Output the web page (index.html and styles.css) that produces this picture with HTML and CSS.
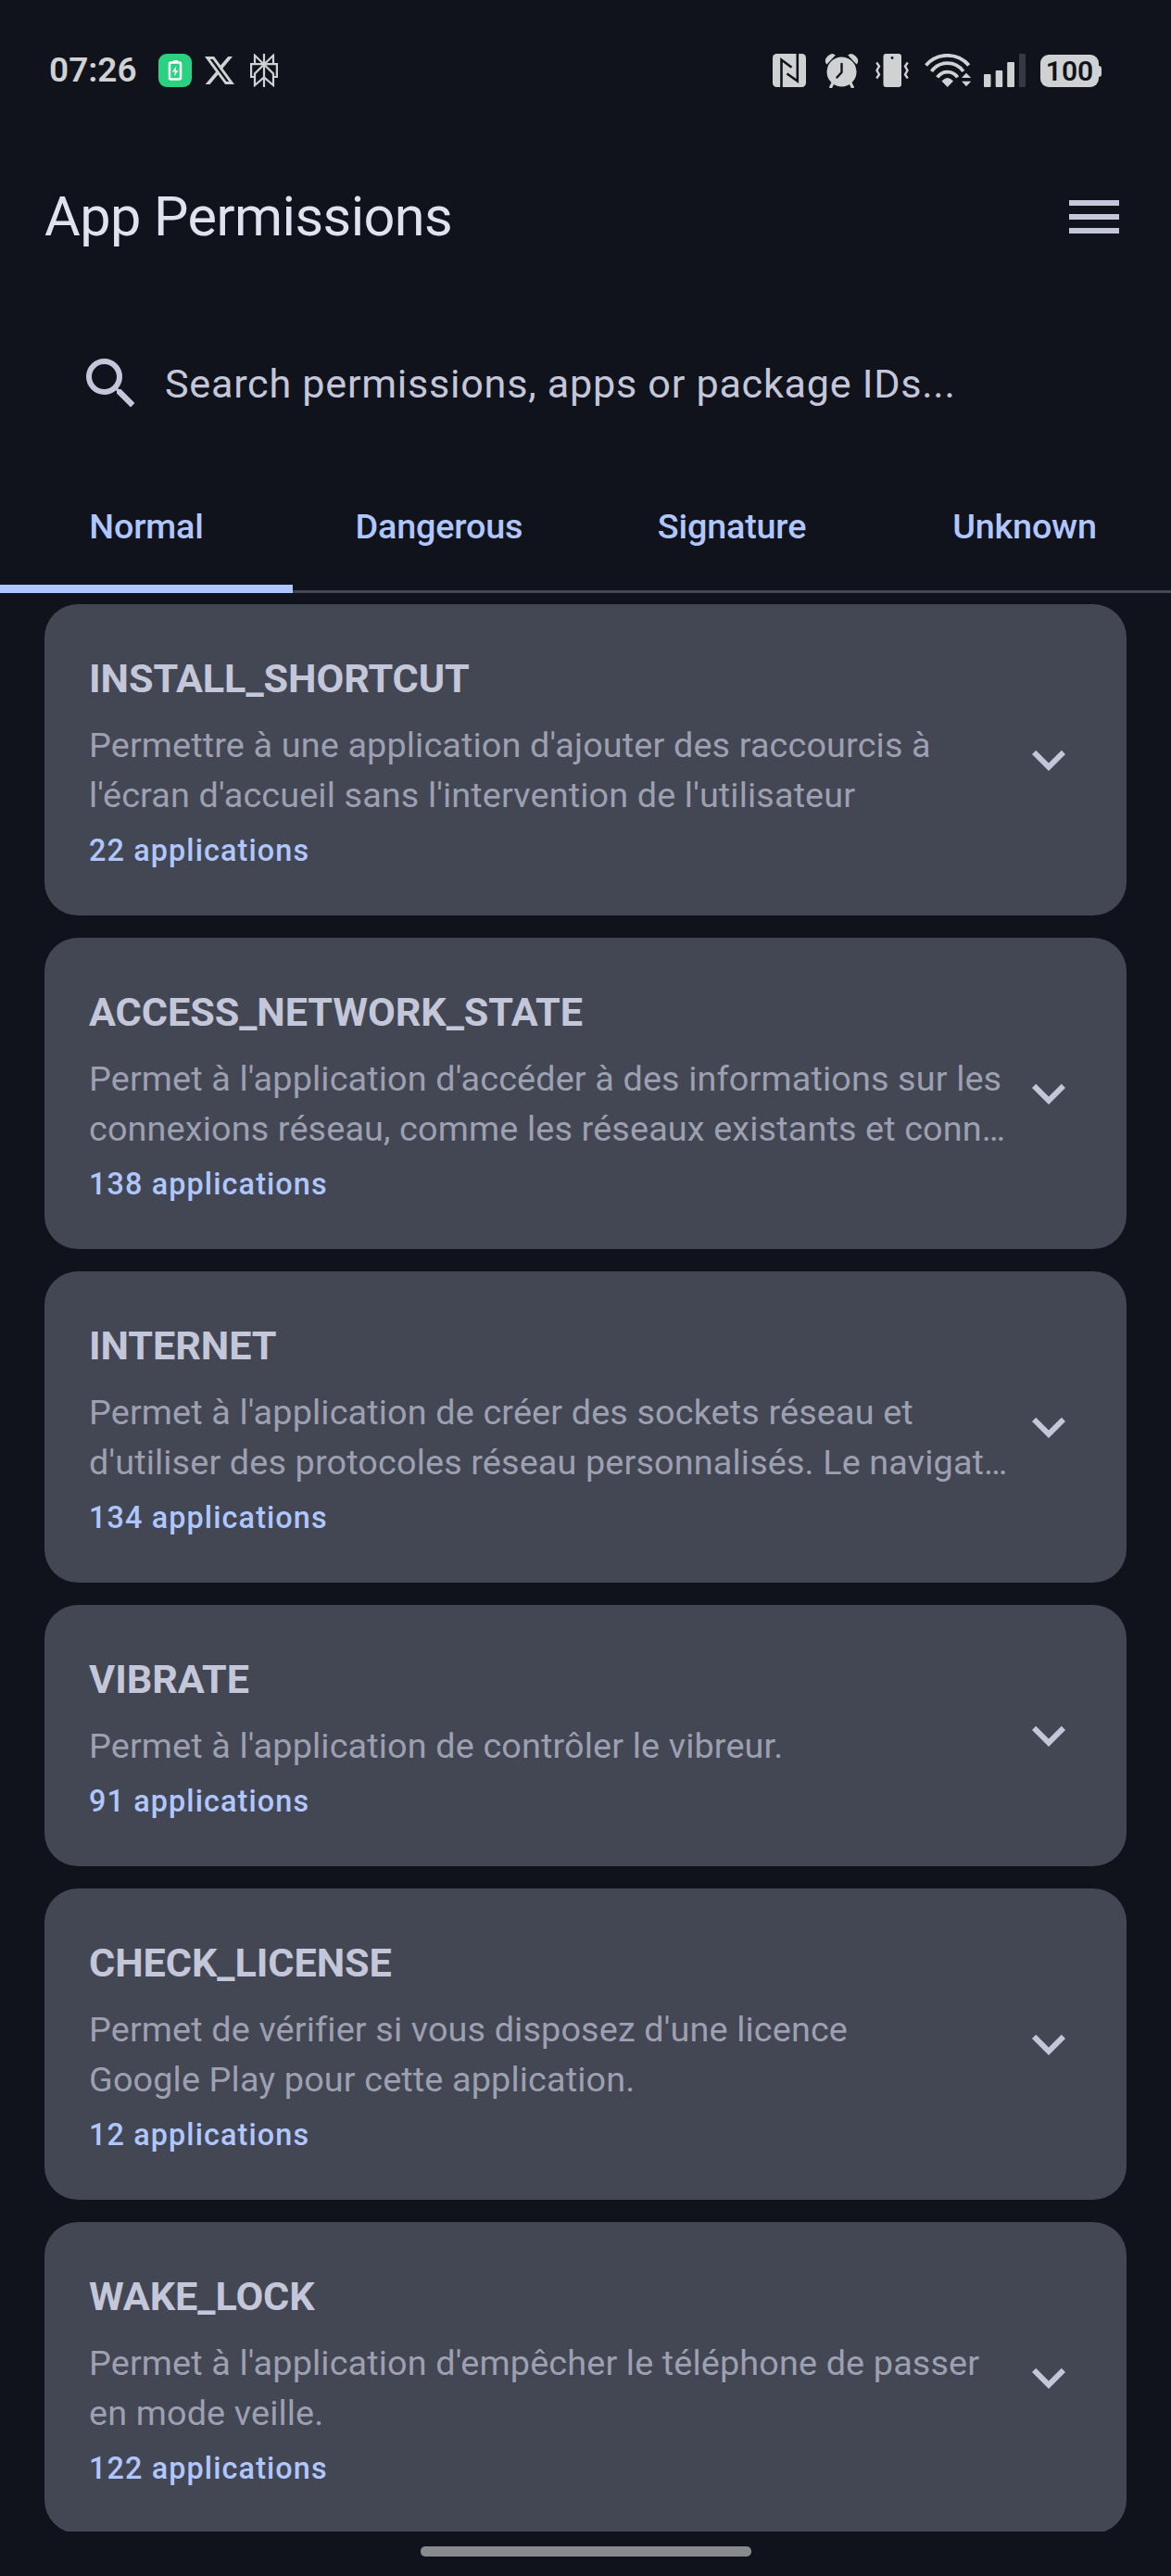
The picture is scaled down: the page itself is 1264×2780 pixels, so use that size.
FILE: index.html
```html
<!DOCTYPE html>
<html lang="fr">
<head>
<meta charset="utf-8">
<title>App Permissions</title>
<link rel="stylesheet" href="styles.css">
</head>
<body>
<svg class="defs" width="0" height="0"><symbol id="chevron" viewBox="0 0 24 24"><path d="M16.59 8.59 12 13.17 7.41 8.59 6 10l6 6 6-6z"/></symbol></svg>
<div class="screen">
  <div class="status">
    <div class="status-left">
      <span class="clock">07:26</span>
      <svg class="i-charge" width="36" height="36" viewBox="0 0 36 36"><rect width="36" height="36" rx="9" fill="#2ad181"/><path d="M16 7h5v2h-5z" fill="#fff"/><rect x="12" y="9.500" width="12" height="18" rx="1.500" fill="none" stroke="#fff" stroke-width="2.500"/><path d="M19.500 13 14.800 19.500h3L17 24.500l4.500-6.500h-3z" fill="#fff"/></svg>
      <svg class="i-x" width="32" height="30" viewBox="1.250 2.250 21.600 19.500" preserveAspectRatio="none"><path fill="currentColor" d="M18.244 2.250h3.308l-7.227 8.260 8.502 11.240H16.170l-5.214-6.817L4.990 21.750H1.680l7.730-8.835L1.254 2.250H8.080l4.713 6.231zm-1.161 17.520h1.833L7.084 4.126H5.117z"/></svg>
      <svg class="i-plex" width="30" height="36" viewBox="0 0 30 36" fill="none" stroke="currentColor" stroke-width="2.200"><path d="M15 0V36M5 11V1.800L15 11.500 25 1.800V11M5 25H1.100V11.200H28.900V25H25M15 11.500 5 21.500V34L15 25.500 25 34V21.500Z"/></svg>
    </div>
    <div class="status-right">
      <svg class="i-nfc" width="36" height="36" viewBox="0 0 36 36"><rect width="36" height="36" rx="4.500" fill="currentColor"/><path d="M9.500 36V6.500L20.500 14.800M26.800 0V29.500L15.500 21.500" fill="none" stroke="#10131c" stroke-width="2.600"/></svg>
      <svg class="i-alarm" width="38" height="38" viewBox="0 0 38 38"><circle cx="18.500" cy="20.500" r="16" fill="currentColor"/><path d="M2.500 12.500Q-1.500 8 3.500 3.500 8-1 11.800 2.500ZM34.500 12.500Q38.500 8 33.500 3.500 29-1 25.200 2.500Z" fill="currentColor"/><path d="M9 32.500 6.800 37M28 32.500 30.200 37" stroke="currentColor" stroke-width="3.200" stroke-linecap="round"/><path d="M18.500 12V21L13.500 26.500" fill="none" stroke="#10131c" stroke-width="2.400" stroke-linecap="round"/></svg>
      <svg class="i-vib" width="36" height="36" viewBox="0 0 36 36"><rect x="8.500" width="19.500" height="36" rx="3" fill="currentColor"/><circle cx="18" cy="4.500" r="1.400" fill="#10131c"/><path d="M1.200 9.500 4 13.500 1.500 18 4 22.500 1.200 26.500M34.800 9.500 32 13.500 34.500 18 32 22.500 34.800 26.500" fill="none" stroke="currentColor" stroke-width="2.400"/></svg>
      <svg class="i-wifi" width="51" height="36" viewBox="0 0 51 36"><g fill="none" stroke="currentColor" stroke-width="3.800"><path d="M1.500 12.500A30.500 30.500 0 0 1 47.800 12.500"/><path d="M7.500 19A21 21 0 0 1 41.800 19"/><path d="M13.800 25.500A13 13 0 0 1 35.500 25.500"/></g><path d="M18.500 29.500Q24.700 22.500 31 29.500L24.700 36zM40 26 45 20.700 50.200 26zM40 29.800 45 35.300 50.200 29.800z" fill="currentColor"/></svg>
      <svg class="i-signal" width="45" height="36" viewBox="0 0 45 36" fill="currentColor"><rect y="22" width="7.500" height="14" rx="1"/><rect x="12.700" y="18" width="7.500" height="18" rx="1"/><rect x="25.200" y="9" width="7.800" height="27" rx="1"/><rect x="38" width="7" height="36" rx="1" fill="#363941"/></svg>
      <div class="battery">100</div>
    </div>
  </div>

  <header class="appbar">
    <h1>App Permissions</h1>
    <svg width="72" height="72" viewBox="0 0 24 24" fill="currentColor"><path d="M3 18h18v-2H3v2zm0-5h18v-2H3v2zm0-7v2h18V6H3z"/></svg>
  </header>

  <div class="search">
    <svg width="72" height="72" viewBox="0 0 24 24" fill="currentColor"><path d="M15.500 14h-.79l-.28-.27A6.471 6.471 0 0 0 16 9.500 6.500 6.500 0 1 0 9.500 16c1.610 0 3.090-.59 4.230-1.570l.27.28v.79l5 4.990L20.490 19l-4.990-5zm-6 0C7.010 14 5 11.990 5 9.500S7.010 5 9.500 5 14 7.010 14 9.500 11.990 14 9.500 14z"/></svg>
    <span>Search permissions, apps or package IDs...</span>
  </div>

  <nav class="tabs">
    <div class="tab active">Normal</div>
    <div class="tab">Dangerous</div>
    <div class="tab">Signature</div>
    <div class="tab">Unknown</div>
  </nav>

  <main class="list">
    <article class="card">
      <div class="info">
        <h2>INSTALL_SHORTCUT</h2>
        <p>Permettre à une application d'ajouter des raccourcis à<br>l'écran d'accueil sans l'intervention de l'utilisateur</p>
        <div class="count">22 applications</div>
      </div>
      <svg class="chevron"><use href="#chevron"/></svg>
    </article>
    <article class="card">
      <div class="info">
        <h2>ACCESS_NETWORK_STATE</h2>
        <p>Permet à l'application d'accéder à des informations sur les<br>connexions réseau, comme les réseaux existants et conn…</p>
        <div class="count">138 applications</div>
      </div>
      <svg class="chevron"><use href="#chevron"/></svg>
    </article>
    <article class="card">
      <div class="info">
        <h2>INTERNET</h2>
        <p>Permet à l'application de créer des sockets réseau et<br>d'utiliser des protocoles réseau personnalisés. Le navigat…</p>
        <div class="count">134 applications</div>
      </div>
      <svg class="chevron"><use href="#chevron"/></svg>
    </article>
    <article class="card">
      <div class="info">
        <h2>VIBRATE</h2>
        <p>Permet à l'application de contrôler le vibreur.</p>
        <div class="count">91 applications</div>
      </div>
      <svg class="chevron"><use href="#chevron"/></svg>
    </article>
    <article class="card">
      <div class="info">
        <h2>CHECK_LICENSE</h2>
        <p>Permet de vérifier si vous disposez d'une licence<br>Google Play pour cette application.</p>
        <div class="count">12 applications</div>
      </div>
      <svg class="chevron"><use href="#chevron"/></svg>
    </article>
    <article class="card">
      <div class="info">
        <h2>WAKE_LOCK</h2>
        <p>Permet à l'application d'empêcher le téléphone de passer<br>en mode veille.</p>
        <div class="count">122 applications</div>
      </div>
      <svg class="chevron"><use href="#chevron"/></svg>
    </article>
  </main>

  <footer class="gesture"><div class="pill"></div></footer>
</div>
</body>
</html>
```
FILE: styles.css
```css
* { box-sizing: border-box; margin: 0; }
body { background: #10131c; font-family: Roboto, sans-serif; color: #c4c6d9; }
svg { display: block; flex: none; }
.defs { position: absolute; }
.screen { width: 1264px; height: 2780px; display: flex; flex-direction: column; overflow: hidden; }

.status { height: 138px; padding: 0 75px 0 53px; display: flex; justify-content: space-between; align-items: flex-start; color: #d0d1d3; }
.status-left, .status-right { display: flex; align-items: center; height: 36px; margin-top: 58px; }
.clock { width: 118px; font-size: 37px; font-weight: 600; line-height: 36px; }
.i-x { margin-left: 14px; }
.i-plex { margin-left: 17px; }
.i-alarm { margin-left: 20px; }
.i-vib { margin-left: 17px; }
.i-wifi { margin-left: 17px; }
.i-signal { margin-left: 13px; }
.battery { position: relative; width: 63px; height: 35px; margin: 1px 3px 0 16px; border-radius: 9px; background: #d0d1d3; color: #10131c; font-size: 30px; font-weight: 600; line-height: 35px; text-align: center; }
.battery::after { content: ""; position: absolute; right: -3px; top: 12px; width: 4px; height: 12px; border-radius: 0 3px 3px 0; background: #d0d1d3; }

.appbar { height: 192px; padding: 0 47px 0 48px; display: flex; align-items: center; justify-content: space-between; }
.appbar h1 { font-size: 59.4px; font-weight: 400; line-height: 76px; letter-spacing: -.55px; color: #e1e2ef; }

.search { height: 166px; padding: 2px 84px 0; display: flex; align-items: center; gap: 22px; font-size: 43.2px; line-height: 65px; letter-spacing: .71px; }

.tabs { height: 144px; display: grid; grid-template-columns: repeat(4, 1fr); box-shadow: inset 0 -3px #434653; }
.tab { display: flex; align-items: center; justify-content: center; font-size: 37.8px; font-weight: 500; letter-spacing: -.2px; color: #b0c6ff; }
.tab.active { box-shadow: inset 0 -9px #b0c6ff; }

.list { height: 2092px; padding: 12px 48px 0; display: flex; flex-direction: column; gap: 24px; overflow: hidden; }
.card { flex: none; padding: 48px; border-radius: 36px; background: #434653; display: flex; align-items: center; }
.info { flex: 1; min-width: 0; white-space: nowrap; }
.card h2 { font-size: 43.2px; font-weight: 700; line-height: 65px; letter-spacing: -.08px; }
.card p { margin: 12px 0; font-size: 37.8px; line-height: 54px; letter-spacing: .13px; color: #9da0b1; }
.count { font-size: 32.4px; font-weight: 500; line-height: 43px; letter-spacing: 1.1px; color: #b0c6ff; }
.chevron { width: 72px; height: 72px; fill: #c4c6d9; }

.gesture { height: 48px; padding-top: 16px; display: flex; justify-content: center; }
.pill { width: 357px; height: 11px; border-radius: 5px; background: #898a8e; }
```
